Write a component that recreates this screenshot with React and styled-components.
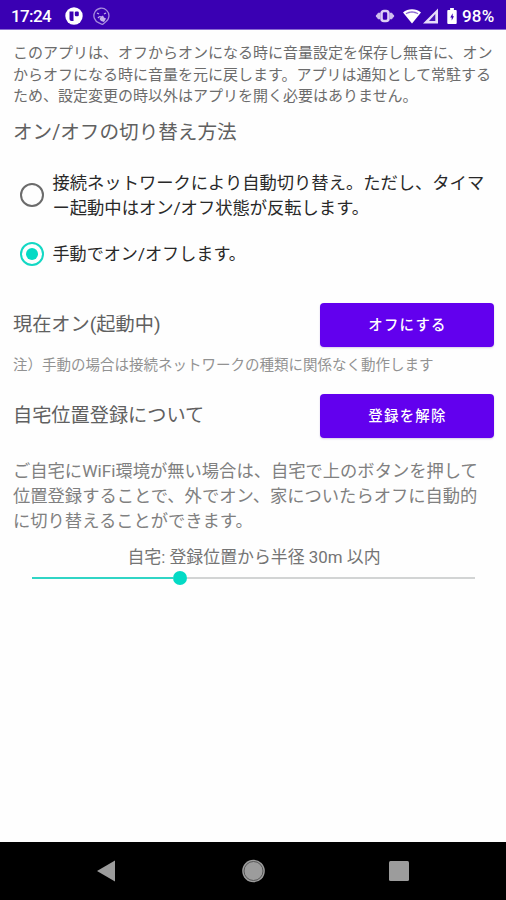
import React from 'react';
import styled, { createGlobalStyle } from 'styled-components';

const GlobalStyle = createGlobalStyle`
  * { box-sizing: border-box; }
  body { margin: 0; background: #fff; }
`;

const Screen = styled.div`
  width: 506px;
  height: 900px;
  display: flex;
  flex-direction: column;
  overflow: hidden;
  background: #fefefe;
  font-family: Roboto, 'Noto Sans CJK JP', sans-serif;
`;

const StatusBar = styled.header`
  height: 30px;
  flex: none;
  display: flex;
  align-items: center;
  padding: 2px 9px 0 11px;
  background: #3a00b3;
  border-bottom: 1px solid #8a6bd0;
  color: #fff;
`;

const StatusText = styled.span`
  flex: none;
  width: ${(p) => p.$w}px;
  font: 500 17px/28px Roboto, sans-serif;
  letter-spacing: ${(p) => p.$spacing || '0'};
  white-space: nowrap;
`;

const StatusIcon = styled.svg`
  display: block;
  flex: none;
  width: ${(p) => p.$w}px;
  height: ${(p) => p.$h}px;
  margin-left: ${(p) => p.$gap || 0}px;
`;

const StatusGroup = styled.div`
  display: flex;
  align-items: center;
  margin-left: auto;
  margin-right: 5px;
`;

const Content = styled.main`
  flex: 1;
  display: flex;
  flex-direction: column;
  padding: 13px 12px 0 13px;
`;

const Paragraph = styled.p`
  margin: ${(p) => p.$top || 0}px 0 0;
  font-size: ${(p) => p.$size}px;
  line-height: ${(p) => p.$line}px;
  color: ${(p) => p.$color || '#747474'};
  white-space: pre;
`;

const Heading = styled.h2`
  margin: ${(p) => p.$top || 0}px 0 0;
  font-size: ${(p) => p.$size || 19.2}px;
  font-weight: 400;
  line-height: 28px;
  color: #606060;
  white-space: nowrap;
`;

const RadioRow = styled.div`
  display: flex;
  align-items: center;
  gap: 8.500px;
  height: ${(p) => p.$height}px;
  margin-top: ${(p) => p.$top}px;
  padding-left: 7px;
`;

const RadioRing = styled.span`
  flex: none;
  display: grid;
  place-items: center;
  width: 24px;
  height: 24px;
  border: 2px solid ${(p) => (p.$on ? '#14d8c4' : '#6b6b6b')};
  border-radius: 50%;
`;

const RadioDot = styled.span`
  width: 12px;
  height: 12px;
  border-radius: 50%;
  background: #03dac5;
`;

const ActionRow = styled.div`
  display: flex;
  align-items: center;
  justify-content: space-between;
  height: 44px;
  margin-top: ${(p) => p.$top}px;
`;

const Button = styled.button`
  width: 174px;
  height: 44px;
  padding: 1px 0 0 1px;
  border: 0;
  border-radius: 4px;
  background: #6200ee;
  box-shadow: 0 1px 2px rgba(60, 0, 140, 0.2);
  color: #fff;
  font: 500 14.4px/20px Roboto, 'Noto Sans CJK JP', sans-serif;
  letter-spacing: 1.3px;
`;

const SliderLabel = styled.div`
  margin-top: 10px;
  padding-left: 1px;
  font-size: 16.9px;
  line-height: 26px;
  text-align: center;
  color: #747474;
`;

const Slider = styled.div`
  display: flex;
  align-items: center;
  height: 14px;
  margin: 1px 19px 0;
`;

const Track = styled.div`
  height: 2px;
  width: ${(p) => p.$width || 'auto'};
  flex: ${(p) => (p.$width ? 'none' : 1)};
  background: ${(p) => p.$color};
`;

const Thumb = styled.div`
  flex: none;
  width: 14px;
  height: 14px;
  border-radius: 50%;
  background: #03dac5;
`;

const NavBar = styled.nav`
  height: 58px;
  flex: none;
  display: flex;
  align-items: center;
  justify-content: space-between;
  padding: 0 95px;
  background: #000;
`;

const NavIcon = styled.svg`
  display: block;
  width: 24px;
  height: 24px;
`;

function Radio({ on }) {
  return <RadioRing $on={on}>{on && <RadioDot />}</RadioRing>;
}

function StatusIcons() {
  return (
    <StatusGroup>
      <StatusIcon $w={20} $h={14} viewBox="0 0 20 14">
        <path d="M1 7l2.500-3h1v6h-1zM19 7l-2.500-3h-1v6h1z" fill="#cfc0ee" stroke="#cfc0ee" />
        <rect x="6.500" y="2" width="7" height="10" rx="2.500" fill="none" stroke="#dccff4" strokeWidth="2.600" />
      </StatusIcon>
      <StatusIcon $w={20} $h={16} $gap={7} viewBox="0 0 20 16">
        <path d="M1 4.500C6 .2 14 .2 19 4.500L10 15.500z" fill="#fff" />
        <path d="M3.600 5.200C7.500 2.500 12.500 2.500 16.400 5.200l-.9 1.100C12.300 4.300 7.700 4.300 4.500 6.300z" fill="#8a67d2" />
      </StatusIcon>
      <StatusIcon $w={17} $h={16} viewBox="0 0 17 16">
        <path d="M16 .5V15.500H1z" fill="#e7dcfa" />
        <path d="M13.300 6v7H7z" fill="#4b16b9" />
      </StatusIcon>
      <StatusIcon $w={10} $h={16} $gap={8} viewBox="0 0 10 17">
        <path d="M3 0h4v2h2q1 0 1 1v13q0 1-1 1H1q-1 0-1-1V3q0-1 1-1h2z" fill="#fff" />
        <path d="M5.700 5.500L3.200 10h1.500v3.200l2.400-4.400h-1.400z" fill="#3a00b3" />
      </StatusIcon>
    </StatusGroup>
  );
}

export default function App() {
  return (
    <Screen>
      <GlobalStyle />
      <StatusBar>
        <StatusText $w={40} $spacing="-0.6px">17:24</StatusText>
        <StatusIcon $w={18} $h={18} $gap={14} viewBox="0 0 18 18">
          <circle cx="9" cy="9" r="8.700" fill="#fff" />
          <path d="M4.500 4.500h4v9.500H6.500q-2 0-2-2z" fill="#3a00b3" />
          <rect x="9.800" y="4.500" width="4" height="4.800" rx="1.200" fill="#3a00b3" />
        </StatusIcon>
        <StatusIcon $w={17} $h={18} $gap={10} viewBox="0 0 17 18">
          <path d="M6 15.800A7.500 7.500 0 1 1 12.500 15L9.500 17.500z" fill="none" stroke="#a78bdd" strokeWidth="1.300" />
          <path d="M4 6l2 1M13 6l-2 1M5 11q1.500-2 3-1" fill="none" stroke="#c4b0ea" strokeWidth="1.300" />
          <path d="M8 9.500l2-1 1 2 2 1-2 3.500-3-1-1.500-2z" fill="#c4b0ea" />
        </StatusIcon>
        <StatusIcons />
        <StatusText $w={35} $spacing="0.2px">98%</StatusText>
      </StatusBar>
      <Content>
        <Paragraph $size={15} $line={21.7} $color="#6c6c6c">
          {'このアプリは、オフからオンになる時に音量設定を保存し無音に、オン\nからオフになる時に音量を元に戻します。アプリは通知として常駐する\nため、設定変更の時以外はアプリを開く必要はありません。'}
        </Paragraph>
        <Heading $top={11} $size={19.6}>オン/オフの切り替え方法</Heading>
        <RadioRow $height={50} $top={22.9}>
          <Radio />
          <Paragraph as="span" $top={1} $size={17.3} $line={25} $color="#292929">
            {'接続ネットワークにより自動切り替え。ただし、タイマ\nー起動中はオン/オフ状態が反転します。'}
          </Paragraph>
        </RadioRow>
        <RadioRow $height={26} $top={21.1}>
          <Radio on />
          <Paragraph as="span" $size={17.1} $line={25} $color="#292929">手動でオン/オフします。</Paragraph>
        </RadioRow>
        <ActionRow $top={36}>
          <Heading>現在オン(起動中)</Heading>
          <Button>オフにする</Button>
        </ActionRow>
        <Paragraph $top={8} $size={14.5} $line={22} $color="#929292">
          注）手動の場合は接続ネットワークの種類に関係なく動作します
        </Paragraph>
        <ActionRow $top={17}>
          <Heading>自宅位置登録について</Heading>
          <Button>登録を解除</Button>
        </ActionRow>
        <Paragraph $top={20.5} $size={17.3} $line={25.3} $color="#808080">
          {'ご自宅にWiFi環境が無い場合は、自宅で上のボタンを押して\n位置登録することで、外でオン、家についたらオフに自動的\nに切り替えることができます。'}
        </Paragraph>
        <SliderLabel>自宅: 登録位置から半径 30m 以内</SliderLabel>
        <Slider>
          <Track $width="141px" $color="#30d5c5" />
          <Thumb />
          <Track $color="#d2d4d4" />
        </Slider>
      </Content>
      <NavBar>
        <NavIcon viewBox="0 0 24 24"><path d="M2 12L20 1.500v21z" fill="#9c9c9c" /></NavIcon>
        <NavIcon viewBox="0 0 24 24">
          <circle cx="12.500" cy="12" r="11.300" fill="#9c9c9c" />
          <circle cx="12.500" cy="12" r="9.500" fill="none" stroke="#555" strokeWidth="1" />
        </NavIcon>
        <NavIcon viewBox="0 0 24 24"><rect x="2" y="2" width="20" height="20" rx="1.500" fill="#9c9c9c" /></NavIcon>
      </NavBar>
    </Screen>
  );
}
